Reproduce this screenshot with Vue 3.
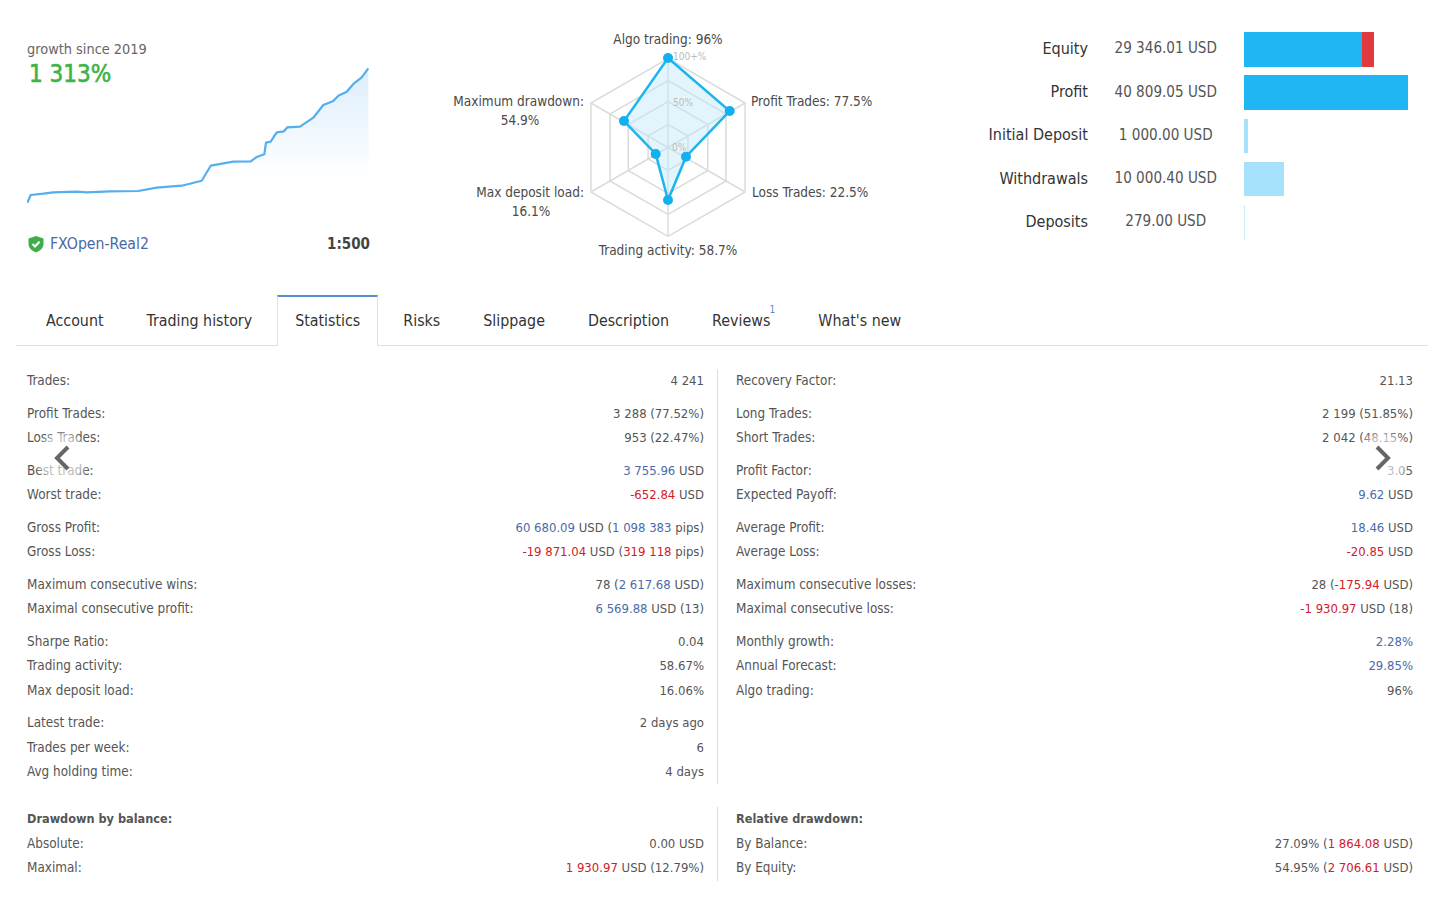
<template>
  <div class="page">
    <!-- top summary -->
    <div class="summary">
      <div class="growth">
        <div class="growth-label">growth since 2019</div>
        <div class="growth-value">1 313%</div>
        <svg class="growth-chart" width="344" height="150" viewBox="0 0 344 150">
          <defs>
            <linearGradient id="fade" x1="0" y1="0" x2="0" y2="1">
              <stop offset="0" stop-color="#dcedfb" />
              <stop offset="0.75" stop-color="#ffffff" />
            </linearGradient>
          </defs>
          <path :d="chartPath + ' L342 150 L0.5 150 Z'" fill="url(#fade)" />
          <path :d="chartPath" fill="none" stroke="#55aeee" stroke-width="2.2" stroke-linejoin="round" />
        </svg>
        <div class="growth-foot">
          <svg width="18" height="18" viewBox="0 0 18 18">
            <path d="M9 1 L16.5 3.5 V9 C16.5 13 13 16 9 17.5 C5 16 1.5 13 1.5 9 V3.5 Z" fill="#3fae49" />
            <path d="M5.5 9 L8 11.5 L12.5 6.8" fill="none" stroke="#fff" stroke-width="2" />
          </svg>
          <a class="server">FXOpen-Real2</a>
          <span class="leverage">1:500</span>
        </div>
      </div>

      <svg class="radar" width="450" height="270" viewBox="0 0 450 270">
        <g fill="none" stroke="#dcdcdc" stroke-width="1.5">
          <polygon v-for="r in radarRings" :key="r" :points="hexPoints(r)" />
          <line v-for="(p, i) in radarSpokes" :key="i" :x1="223" :y1="147.5" :x2="p[0]" :y2="p[1]" />
        </g>
        <polygon :points="radarData.map((p) => p.join(',')).join(' ')" fill="#bfe8fb" fill-opacity="0.45" stroke="#1eb4ef" stroke-width="2.5" />
        <circle v-for="(p, i) in radarData" :key="i" :cx="p[0]" :cy="p[1]" r="5" fill="#12b0ee" />
        <g class="radar-scale">
          <text x="228" y="60">100+%</text>
          <text x="228" y="106">50%</text>
          <text x="227" y="151">0%</text>
        </g>
        <g class="radar-label">
          <text x="223" y="44" text-anchor="middle">Algo trading: 96%</text>
          <text x="306" y="106">Profit Trades: 77.5%</text>
          <text x="307" y="197">Loss Trades: 22.5%</text>
          <text x="223" y="255" text-anchor="middle">Trading activity: 58.7%</text>
          <text x="139" y="197" text-anchor="end">Max deposit load:</text>
          <text x="86" y="216" text-anchor="middle">16.1%</text>
          <text x="139" y="106" text-anchor="end">Maximum drawdown:</text>
          <text x="75" y="125" text-anchor="middle">54.9%</text>
        </g>
      </svg>

      <div class="balance">
        <div v-for="b in balanceRows" :key="b.label" class="balance-row">
          <span class="balance-label">{{ b.label }}</span>
          <span class="balance-value">{{ b.value }}</span>
          <span class="balance-bar">
            <i v-for="(s, i) in b.bars" :key="i" :style="{ width: s.w + 'px', background: s.c }"></i>
          </span>
        </div>
      </div>
    </div>

    <!-- tabs -->
    <div class="tabs">
      <div v-for="t in tabs" :key="t" class="tab" :class="{ active: t === 'Statistics' }">
        {{ t }}<sup v-if="t === 'Reviews'">1</sup>
      </div>
    </div>

    <!-- statistics -->
    <div class="stats">
      <div v-for="(col, c) in statColumns" :key="c" class="stats-col">
        <div v-for="(group, g) in col" :key="g" class="stats-group">
          <div v-for="row in group" :key="row[0]" class="stats-row">
            <span>{{ row[0] }}</span>
            <span class="stats-value">
              <span v-for="(seg, s) in row[1]" :key="s" :class="seg[1]">{{ seg[0] }}</span>
            </span>
          </div>
        </div>
      </div>
    </div>

    <div class="stats stats-bottom">
      <div v-for="d in drawdown" :key="d.title" class="stats-col">
        <div class="stats-title">{{ d.title }}</div>
        <div v-for="row in d.rows" :key="row[0]" class="stats-row">
          <span>{{ row[0] }}</span>
          <span class="stats-value">
            <span v-for="(seg, s) in row[1]" :key="s" :class="seg[1]">{{ seg[0] }}</span>
          </span>
        </div>
      </div>
    </div>

    <!-- carousel arrows -->
    <div class="arrow arrow-left">
      <svg width="18" height="28" viewBox="0 0 18 28"><path d="M15 3 L4 14 L15 25" /></svg>
    </div>
    <div class="arrow arrow-right">
      <svg width="18" height="28" viewBox="0 0 18 28"><path d="M3 3 L14 14 L3 25" /></svg>
    </div>
  </div>
</template>

<script setup>
const chartPts = [
  [82, 548], [92, 525], [130, 521], [160, 517], [230, 515], [260, 517], [330, 514], [415, 513],
  [470, 503], [545, 497], [605, 482], [632, 437], [700, 425], [752, 424], [770, 411], [793, 403],
  [798, 368], [812, 365], [830, 337], [852, 334], [862, 322], [900, 320], [940, 293], [970, 255],
  [1000, 243], [1015, 227], [1040, 215], [1062, 190], [1085, 172], [1105, 145],
]
// zoomed reference coordinates -> chart box starting at x=27, y=62
const chartPath = chartPts
  .map((p, i) => `${i ? 'L' : 'M'}${(p[0] / 3 - 27).toFixed(1)} ${(p[1] / 3 + 20 - 62).toFixed(1)}`)
  .join(' ')

const radarRings = [89, 67, 46, 23]
const hexAngles = [-90, -30, 30, 90, 150, 210]
const hexVertex = (r, a) => [
  +(223 + r * Math.cos((a * Math.PI) / 180)).toFixed(1),
  +(147.5 + r * Math.sin((a * Math.PI) / 180)).toFixed(1),
]
const hexPoints = (r) => hexAngles.map((a) => hexVertex(r, a).join(',')).join(' ')
const radarSpokes = hexAngles.map((a) => hexVertex(89, a))
const radarData = [
  [223, 58], [284.7, 111], [241, 156.7], [223, 200], [210.7, 154], [179, 121],
]

const balanceRows = [
  { label: 'Equity', value: '29 346.01 USD', bars: [{ w: 118, c: '#1fb6f3' }, { w: 12, c: '#e03a3e' }] },
  { label: 'Profit', value: '40 809.05 USD', bars: [{ w: 164.5, c: '#1fb6f3' }] },
  { label: 'Initial Deposit', value: '1 000.00 USD', bars: [{ w: 4, c: '#a5e1fa' }] },
  { label: 'Withdrawals', value: '10 000.40 USD', bars: [{ w: 40, c: '#a5e1fa' }] },
  { label: 'Deposits', value: '279.00 USD', bars: [{ w: 1.5, c: '#c5ecfb' }] },
]

const tabs = ['Account', 'Trading history', 'Statistics', 'Risks', 'Slippage', 'Description', 'Reviews', "What's new"]

const statColumns = [
  [
    [['Trades:', [['4 241']]]],
    [
      ['Profit Trades:', [['3 288 (77.52%)']]],
      ['Loss Trades:', [['953 (22.47%)']]],
    ],
    [
      ['Best trade:', [['3 755.96', 'blue'], [' USD']]],
      ['Worst trade:', [['-652.84', 'red'], [' USD']]],
    ],
    [
      ['Gross Profit:', [['60 680.09', 'blue'], [' USD ('], ['1 098 383', 'blue'], [' pips)']]],
      ['Gross Loss:', [['-19 871.04', 'red'], [' USD ('], ['319 118', 'red'], [' pips)']]],
    ],
    [
      ['Maximum consecutive wins:', [['78 ('], ['2 617.68', 'blue'], [' USD)']]],
      ['Maximal consecutive profit:', [['6 569.88', 'blue'], [' USD (13)']]],
    ],
    [
      ['Sharpe Ratio:', [['0.04']]],
      ['Trading activity:', [['58.67%']]],
      ['Max deposit load:', [['16.06%']]],
    ],
    [
      ['Latest trade:', [['2 days ago']]],
      ['Trades per week:', [['6']]],
      ['Avg holding time:', [['4 days']]],
    ],
  ],
  [
    [['Recovery Factor:', [['21.13']]]],
    [
      ['Long Trades:', [['2 199 (51.85%)']]],
      ['Short Trades:', [['2 042 (48.15%)']]],
    ],
    [
      ['Profit Factor:', [['3.05']]],
      ['Expected Payoff:', [['9.62', 'blue'], [' USD']]],
    ],
    [
      ['Average Profit:', [['18.46', 'blue'], [' USD']]],
      ['Average Loss:', [['-20.85', 'red'], [' USD']]],
    ],
    [
      ['Maximum consecutive losses:', [['28 ('], ['-175.94', 'red'], [' USD)']]],
      ['Maximal consecutive loss:', [['-1 930.97', 'red'], [' USD (18)']]],
    ],
    [
      ['Monthly growth:', [['2.28%', 'blue']]],
      ['Annual Forecast:', [['29.85%', 'blue']]],
      ['Algo trading:', [['96%']]],
    ],
  ],
]

const drawdown = [
  {
    title: 'Drawdown by balance:',
    rows: [
      ['Absolute:', [['0.00 USD']]],
      ['Maximal:', [['1 930.97', 'red'], [' USD (12.79%)']]],
    ],
  },
  {
    title: 'Relative drawdown:',
    rows: [
      ['By Balance:', [['27.09% ('], ['1 864.08', 'red'], [' USD)']]],
      ['By Equity:', [['54.95% ('], ['2 706.61', 'red'], [' USD)']]],
    ],
  },
]
</script>

<style scoped>
.page {
  position: relative;
  width: 1445px;
  height: 898px;
  overflow: hidden;
  background: #fff;
  color: #555;
  font-family: "DejaVu Sans", "Noto Sans", sans-serif;
  font-stretch: condensed;
  font-size: 13.4px;
}

.summary {
  display: flex;
  height: 295px;
}

.growth {
  width: 344px;
  margin-left: 27px;
  padding-top: 40px;
  box-sizing: border-box;
}

.growth-label {
  color: #666;
  font-size: 14.4px;
  line-height: 18px;
}

.growth-value {
  margin-top: 1px;
  margin-left: 2px;
  color: #3fb24a;
  font-size: 24px;
  line-height: 30px;
  -webkit-text-stroke: 0.6px #3fb24a;
}

.growth-chart {
  display: block;
  margin-top: -27px;
}

.growth-foot {
  display: flex;
  align-items: center;
  margin-top: 22px;
  font-size: 15.7px;
}

.server {
  margin-left: 5px;
  color: #4a69a6;
}

.leverage {
  margin-left: auto;
  margin-right: 1px;
  color: #444;
  font-size: 15px;
  font-weight: 700;
}

.radar {
  display: block;
  margin-left: 74px;
  flex: none;
}

.radar-label text {
  fill: #4a4a4a;
  font-size: 13.5px;
}

.radar-scale text {
  fill: #bbb;
  font-size: 10px;
}

.balance {
  flex: none;
  padding-top: 32px;
  width: 590px;
}

.balance-row {
  display: flex;
  align-items: center;
  height: 34.5px;
  margin-bottom: 8.8px;
}

.balance-label {
  width: 193px;
  flex: none;
  margin-top: -2px;
  text-align: right;
  color: #333;
  font-size: 16px;
}

.balance-value {
  width: 155.5px;
  flex: none;
  margin-top: -2px;
  text-align: center;
  color: #555;
  font-size: 15.1px;
}

.balance-bar {
  display: flex;
  height: 100%;
}

.balance-bar i {
  display: block;
  height: 100%;
}

.tabs {
  display: flex;
  height: 50px;
  margin: 0 17px 0 16px;
  padding-left: 12px;
  border-bottom: 1px solid #e0e0e0;
}

.tab {
  position: relative;
  height: 50px;
  box-sizing: border-box;
  margin-right: 7px;
  padding: 0 18px;
  border-top: 2px solid transparent;
  line-height: 48px;
  color: #333;
  font-size: 15.85px;
  white-space: nowrap;
}

.tab:nth-child(7) {
  margin-right: 12px;
}

.tab.active {
  height: 51px;
  border: 1px solid #e0e0e0;
  border-top: 2px solid #5b8bd0;
  border-bottom: 0;
  background: #fff;
  padding: 0 17px;
}

.tab sup {
  position: absolute;
  top: 6px;
  right: 13px;
  color: #5b8bd0;
  font-size: 10px;
  line-height: 14px;
}

.stats {
  display: grid;
  grid-template-columns: 690px 1fr;
  margin-top: 23px;
  padding: 0 32px 0 27px;
}

.stats-bottom {
  margin-top: 23px;
}

.stats-col {
  min-width: 0;
}

.stats-col:first-child {
  padding-right: 13px;
}

.stats-col:last-child {
  border-left: 1px solid #ddd;
  padding-left: 18px;
}

.stats-group {
  margin-bottom: 8.25px;
}

.stats-group:last-child {
  margin-bottom: 0;
}

.stats-row,
.stats-title {
  display: flex;
  justify-content: space-between;
  height: 24.4px;
  line-height: 24.4px;
  white-space: pre;
}

.stats-value {
  font-size: 13px;
}

.stats-title {
  color: #555;
  font-size: 12.6px;
  font-weight: 700;
}

.blue {
  color: #4a6ba8;
}

.red {
  color: #cf2027;
}

.arrow {
  position: absolute;
  top: 428px;
  display: flex;
  align-items: center;
  justify-content: center;
  width: 58px;
  height: 60px;
  background: radial-gradient(closest-side, rgba(255, 255, 255, 0.6) 70%, rgba(255, 255, 255, 0));
}

.arrow-left {
  left: 33px;
}

.arrow-right {
  left: 1354px;
}

.arrow path {
  fill: none;
  stroke: #666;
  stroke-width: 4;
}
</style>
